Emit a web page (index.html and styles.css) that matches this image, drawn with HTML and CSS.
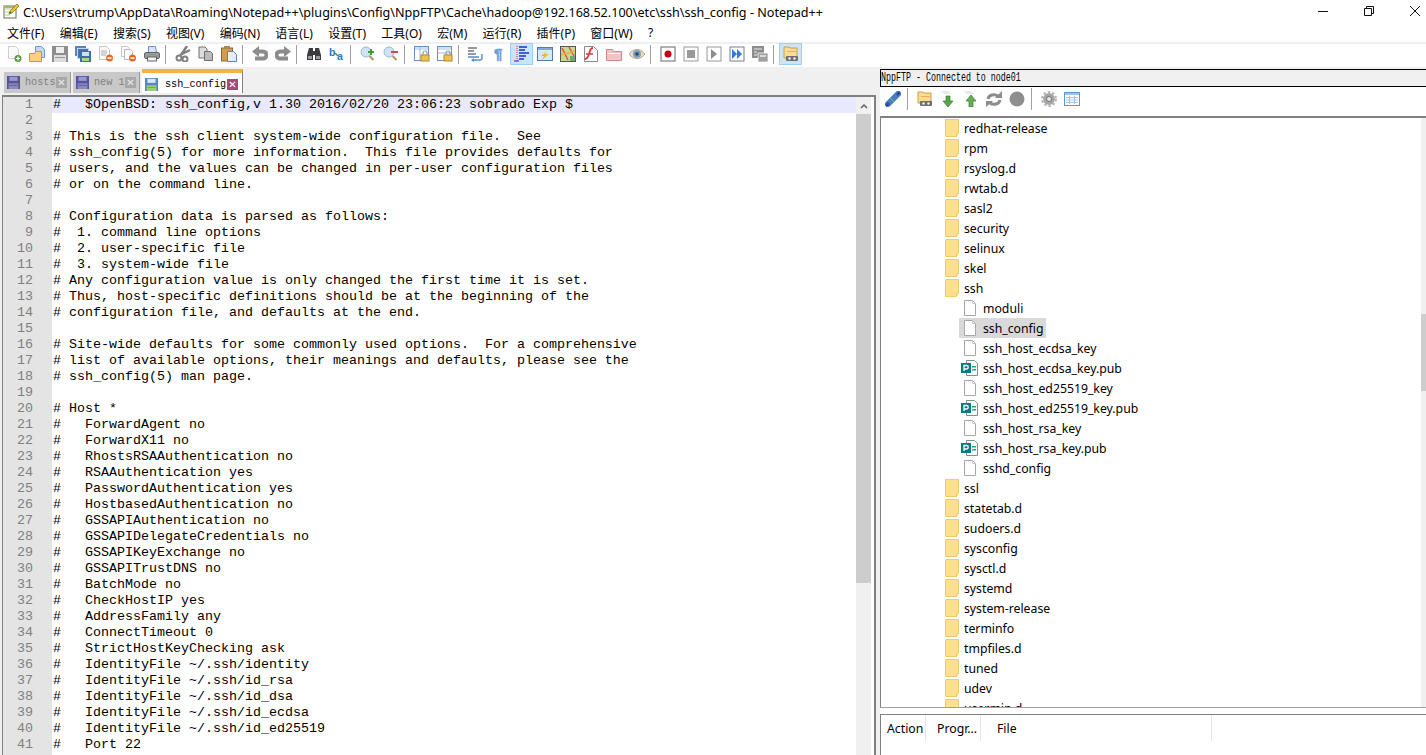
FILE: index.html
```html
<!DOCTYPE html>
<html lang="zh">
<head>
    <meta charset="UTF-8">
    <meta name="viewport" content="width=device-width, initial-scale=1.0">
    <title>ssh_config - Notepad++</title>
    <link rel="stylesheet" href="styles.css">
</head>
<body>

<svg class="defs" width="0" height="0">
    <symbol id="floppy" viewBox="0 0 16 16">
        <rect x="0" y="0" width="16" height="16" fill="#54549c"/>
        <rect x="3" y="1" width="10" height="5" fill="#9a9ac8"/>
        <rect x="2" y="9" width="12" height="7" fill="#8a8abc"/>
        <rect x="3" y="11" width="10" height="1" fill="#54549c"/>
    </symbol>
    <symbol id="floppyon" viewBox="0 0 16 16">
        <rect x="0" y="0" width="16" height="16" fill="#5a86c8"/>
        <rect x="3" y="1" width="10" height="5" fill="#dbe8f8"/>
        <rect x="2" y="9" width="12" height="7" fill="#9ed070"/>
        <rect x="3" y="11" width="10" height="1" fill="#6aa040"/>
    </symbol>
    <symbol id="folder" viewBox="0 0 16 18">
        <path d="M1.500 .5h13v14l-2 3h-11z" fill="#ffe08f" stroke="#f2cb6a"/>
        <path d="M12.500 17.500v-3h2" fill="#fff3c8" stroke="#f2cb6a"/>
    </symbol>
    <symbol id="file" viewBox="0 0 14 16">
        <path d="M1.500 .5h8l3 3v12h-11z" fill="#fff" stroke="#a8a8a8"/>
        <path d="M9.500 .5v3h3" fill="none" stroke="#c8c8c8"/>
    </symbol>
    <symbol id="pub" viewBox="0 0 18 16">
        <path d="M5.500 .5h8l3 3v12h-11z" fill="#fff" stroke="#8a8a8a"/>
        <rect x="11" y="6" width="4" height="1.500" fill="#2a9a96"/>
        <rect x="11" y="9" width="4" height="1.500" fill="#2a9a96"/>
        <rect x="0" y="3" width="10" height="10" fill="#087b80"/>
        <path d="M3 11V5.500h2.500a1.700 1.700 0 0 1 0 3.500H3" fill="none" stroke="#fff" stroke-width="1.300"/>
    </symbol>
    <symbol id="tapefolder" viewBox="0 0 16 16">
        <path d="M1 1h5l1 1h7v10H1z" fill="#fbdc93" stroke="#c9a04c"/>
        <rect x="4" y="5" width="9" height="1" fill="#f4a860"/>
        <rect x="3" y="10" width="12" height="5" rx="1" fill="#6e6e6e"/>
        <circle cx="6.500" cy="12.500" r="1.300" fill="#eee"/>
        <circle cx="11.500" cy="12.500" r="1.300" fill="#eee"/>
    </symbol>
</svg>

<div class="app">
    <div class="titlebar">
        <svg class="appicon" width="16" height="16" viewBox="0 0 16 16">
            <rect x="1" y="3" width="12" height="12" fill="#fff" stroke="#6a6a50"/>
            <path d="M2 6h10M2 9h7M2 12h5" stroke="#c8c080"/>
            <path d="M1 3h12v2H1z" fill="#a8b86a"/>
            <path d="M6 11l1-3 7-7 2 2-7 7z" fill="#f4c020" stroke="#5c7a20" stroke-width=".7"/>
            <path d="M6 11l1-3 2 2z" fill="#3a8a20"/>
        </svg>
        <span class="wintitle">C:\Users\trump\AppData\Roaming\Notepad++\plugins\Config\NppFTP\Cache\hadoop@192.168.52.100\etc\ssh\ssh_config - Notepad++</span>
        <div class="winctl">
            <button><svg width="10" height="10" viewBox="0 0 10 10"><path d="M0 5.500h10" stroke="#111"/></svg></button>
            <button><svg width="10" height="10" viewBox="0 0 10 10"><path d="M.5 2.500h7v7h-7zM2.500 2.500v-2h7v7h-2" fill="none" stroke="#111"/></svg></button>
            <button><svg width="10" height="10" viewBox="0 0 10 10"><path d="M0 0l10 10M10 0L0 10" stroke="#111"/></svg></button>
        </div>
    </div>

    <div class="menubar">
        <span>文件(F)</span><span>编辑(E)</span><span>搜索(S)</span><span>视图(V)</span><span>编码(N)</span><span>语言(L)</span><span>设置(T)</span><span>工具(O)</span><span>宏(M)</span><span>运行(R)</span><span>插件(P)</span><span>窗口(W)</span><span>?</span>
    </div>

    <div class="toolbar">
        <!-- file -->
        <button><svg viewBox="0 0 16 16"><path d="M2.500 .5h7l3 3v9h-10z" fill="#fafafa" stroke="#cfcfcf"/><circle cx="12" cy="12.500" r="3.500" fill="#5b9a3c"/><path d="M10 12.500h4M12 10.500v4" stroke="#fff" stroke-width="1.200"/></svg></button>
        <button><svg viewBox="0 0 16 16"><path d="M6.500 .5h6l3 3v8h-9z" fill="#c5d8f2" stroke="#6f96cf"/><path d="M.5 7.500h5l1-2h6v10H.5z" fill="#fbd27a" stroke="#c49a3e"/></svg></button>
        <button><svg viewBox="0 0 16 16"><rect x="0" y="0" width="16" height="16" fill="#8e8e8e"/><rect x="4" y="1" width="8" height="6" fill="#efefef"/><rect x="2" y="9" width="12" height="7" fill="#dcdcdc"/><rect x="3" y="11" width="10" height="1" fill="#999"/></svg></button>
        <button><svg viewBox="0 0 16 16"><rect x="0" y="0" width="11" height="10" fill="#5f82b8"/><rect x="2.500" y="2.500" width="11" height="10" fill="#4a72aa" stroke="#c5d6ee"/><rect x="5" y="5" width="11" height="11" fill="#3f6ea8"/><rect x="7" y="6" width="7" height="4" fill="#cfe0f4"/><rect x="7" y="12" width="7" height="3" fill="#a8d878"/></svg></button>
        <button><svg viewBox="0 0 16 16"><path d="M1.500 .5h7l3 3v10h-10z" fill="#fafafa" stroke="#c4c4c4"/><path d="M3 5h6M3 7h6M3 9h5" stroke="#aaa"/><circle cx="11.500" cy="12" r="3.500" fill="#e86a20"/><rect x="9.500" y="11.300" width="4" height="1.500" fill="#fff"/></svg></button>
        <button><svg viewBox="0 0 16 16"><path d="M.5 .5h6l2 2v8h-8z" fill="#fafafa" stroke="#c8c8c8"/><path d="M3.500 3.500h6l2 2v8h-8z" fill="#fafafa" stroke="#b8b8b8"/><circle cx="11.500" cy="12" r="3.500" fill="#e86a20"/><rect x="9.500" y="11.300" width="4" height="1.500" fill="#fff"/></svg></button>
        <button><svg viewBox="0 0 16 16"><path d="M4.500 .5h7l1 6h-8z" fill="#d5e4f6" stroke="#6f8fc0"/><rect x=".5" y="6.500" width="15" height="6" rx="1.500" fill="#9a9a9a" stroke="#666"/><rect x="3.500" y="11" width="9" height="4" fill="#f4f4f4" stroke="#666"/></svg></button>
        <i class="sep"></i>
        <!-- edit -->
        <button><svg viewBox="0 0 16 16"><path d="M12 0L6 9M15 4L5 9" stroke="#808080" stroke-width="2.500" fill="none"/><circle cx="4" cy="12" r="2.500" fill="none" stroke="#808080" stroke-width="2"/><circle cx="10" cy="13" r="2.500" fill="none" stroke="#808080" stroke-width="2"/></svg></button>
        <button><svg viewBox="0 0 16 16"><path d="M1 1h6l2 2v9H1z" fill="#ddd" stroke="#707070"/><path d="M6.500 5.500h6l2 2v7h-8z" fill="#bbb" stroke="#707070"/></svg></button>
        <button><svg viewBox="0 0 16 16"><rect x=".5" y="2" width="11" height="13" fill="#d49a50" stroke="#8a6a30"/><rect x="3" y="0" width="6" height="3" fill="#a88850"/><path d="M6.500 5.500h6l3 3v7h-9z" fill="#e4eefa" stroke="#6080b8"/></svg></button>
        <i class="sep"></i>
        <button><svg viewBox="0 0 16 16"><path d="M5 5.500h6a3.500 3.500 0 0 1 0 7H3" fill="none" stroke="#8c8c8c" stroke-width="4"/><path d="M7 0v11L0 5.500z" fill="#8c8c8c"/></svg></button>
        <button><svg viewBox="0 0 16 16"><path d="M11 5.500H5a3.500 3.500 0 0 0 0 7h8" fill="none" stroke="#8c8c8c" stroke-width="4"/><path d="M9 0v11l7-5.500z" fill="#8c8c8c"/></svg></button>
        <i class="sep"></i>
        <!-- search -->
        <button><svg viewBox="0 0 16 16"><path d="M3 2h4v3h2V2h4l2 7v5H9V9H7v5H1V9z" fill="#3c3c3c"/><rect x="2" y="10" width="4" height="3" fill="#99a"/><rect x="10" y="10" width="4" height="3" fill="#99a"/></svg></button>
        <button><svg viewBox="0 0 16 16"><text x="0" y="9.500" class="glyph bl">b</text><text x="8" y="13.700" class="glyph bl">a</text><path d="M6 7l3 3" stroke="#4a9a4a" stroke-width="1.500"/></svg></button>
        <i class="sep"></i>
        <button><svg viewBox="0 0 16 16"><circle cx="6" cy="6" r="5" fill="#cfe2f6" stroke="#9ab8d8"/><path d="M9.500 10l4 4" stroke="#b8925a" stroke-width="2"/><path d="M8 6h6M11 3v6" stroke="#3d9a3d" stroke-width="2"/></svg></button>
        <button><svg viewBox="0 0 16 16"><circle cx="6" cy="6" r="5" fill="#cfe2f6" stroke="#9ab8d8"/><path d="M9.500 10l4 4" stroke="#b8925a" stroke-width="2"/><path d="M8 6h7" stroke="#d84848" stroke-width="2"/></svg></button>
        <i class="sep"></i>
        <!-- view -->
        <button><svg viewBox="0 0 16 16"><rect x=".5" y=".5" width="14" height="14" fill="#fff" stroke="#6a90c8"/><rect x="1" y="1" width="13" height="3" fill="#cfe0f4"/><path d="M6 1v13" stroke="#9ab8e0"/><rect x="7" y="9" width="8" height="6" fill="#ecc14e" stroke="#b08a2c"/><path d="M9 9V7a2 2 0 0 1 4 0v2" fill="none" stroke="#999" stroke-width="1.200"/></svg></button>
        <button><svg viewBox="0 0 16 16"><rect x=".5" y=".5" width="14" height="14" fill="#fff" stroke="#6a90c8"/><rect x="1" y="1" width="13" height="3" fill="#cfe0f4"/><path d="M1 7h13" stroke="#9ab8e0"/><rect x="7" y="9" width="8" height="6" fill="#ecc14e" stroke="#b08a2c"/><path d="M9 9V7a2 2 0 0 1 4 0v2" fill="none" stroke="#999" stroke-width="1.200"/></svg></button>
        <i class="sep"></i>
        <button><svg viewBox="0 0 16 16"><path d="M0 2h9M0 5h6M0 8h8" stroke="#333" stroke-width="1.200"/><path d="M0 11h11" stroke="#7da8dc" stroke-width="2"/><path d="M4 14h8a2 2 0 0 0 2-2V8" fill="none" stroke="#5a8fd0" stroke-width="1.400"/><path d="M6 12v4l-3-2z" fill="#5a8fd0"/></svg></button>
        <button><svg viewBox="0 0 16 16"><text x="3" y="12.800" class="glyph pil">¶</text></svg></button>
        <button class="on"><svg viewBox="0 0 16 16"><path d="M3 0v16" stroke="#d83030" stroke-dasharray="1 1"/><path d="M5 1h8M5 4h6M5 7h10M5 10h7M5 13h5" stroke="#1030d8" stroke-width="1.400"/><path d="M0 15h5" stroke="#1030d8"/></svg></button>
        <button><svg viewBox="0 0 16 16"><rect x=".5" y="1.500" width="15" height="13" fill="#d8e8f8" stroke="#5478b0"/><rect x="1" y="2" width="14" height="2" fill="#88a8d8"/><path d="M10 5L4 10h3l-2 4 7-6H8z" fill="#f0b830"/></svg></button>
        <button><svg viewBox="0 0 16 16"><rect x=".5" y=".5" width="15" height="15" fill="#c8d890" stroke="#555"/><path d="M2 2l6 12M9 1l5 9" stroke="#e05050" stroke-width="1.500"/><path d="M1 9l14-4" stroke="#e8b040" stroke-width="1.500"/><rect x="10" y="10" width="5" height="5" fill="#70a870"/></svg></button>
        <button><svg viewBox="0 0 16 16"><path d="M1.500 .5h9l4 4v11h-13z" fill="#fff" stroke="#8a8a8a"/><path d="M10 2C7 2 7 5 6 8S4 13 2 13" fill="none" stroke="#d83a3a" stroke-width="1.800"/><path d="M3 8h7" stroke="#d83a3a" stroke-width="1.500"/></svg></button>
        <button><svg viewBox="0 0 16 16"><path d="M.5 3.500h6l1 2h8v9H.5z" fill="#f3c4c4" stroke="#c88"/><path d="M2 7.500h12" stroke="#fff"/></svg></button>
        <button><svg viewBox="0 0 16 16"><path d="M0 8c4-6 12-6 16 0-4 6-12 6-16 0z" fill="#e8dcc8" stroke="#c0a888"/><circle cx="8" cy="8" r="4" fill="#7aa0c8"/><circle cx="8" cy="8" r="1.800" fill="#345"/></svg></button>
        <i class="sep"></i>
        <!-- macro -->
        <button><svg viewBox="0 0 16 16"><rect x="1" y="1" width="14" height="14" fill="#fff" stroke="#666"/><circle cx="8" cy="8" r="3.500" fill="#c80014"/></svg></button>
        <button><svg viewBox="0 0 16 16"><rect x="1" y="1" width="14" height="14" fill="#fff" stroke="#999"/><rect x="4" y="4" width="8" height="8" fill="#999"/></svg></button>
        <button><svg viewBox="0 0 16 16"><rect x="1" y="1" width="14" height="14" fill="#fff" stroke="#999"/><path d="M5 3v10l6-5z" fill="#8c8c8c"/></svg></button>
        <button><svg viewBox="0 0 16 16"><rect x="1" y="1" width="14" height="14" fill="#fff" stroke="#7080a0"/><path d="M3 3v10l5-5zM8 3v10l5-5z" fill="#3a78d8"/></svg></button>
        <button><svg viewBox="0 0 16 16"><rect x="0" y="0" width="12" height="12" fill="#8c8c8c"/><rect x="6" y="7" width="10" height="9" fill="#a0a0a0" stroke="#fff" stroke-width=".7"/><path d="M2 3h8M2 6h3M2 9h3" stroke="#eee"/><path d="M8 10h6" stroke="#eee" stroke-width="1.500"/></svg></button>
        <i class="sep"></i>
        <button class="on"><svg><use href="#tapefolder"/></svg></button>
    </div>

    <div class="main">
        <div class="left">
            <div class="tabs">
                <div class="tab"><svg class="fl"><use href="#floppy"/></svg><span>hosts</span><b class="x">✕</b></div>
                <div class="tab"><svg class="fl"><use href="#floppy"/></svg><span>new 1</span><b class="x">✕</b></div>
                <div class="tab active"><svg class="fl"><use href="#floppyon"/></svg><span>ssh_config</span><b class="x">✕</b></div>
            </div>
            <div class="editor">
                <pre class="gutter">1
2
3
4
5
6
7
8
9
10
11
12
13
14
15
16
17
18
19
20
21
22
23
24
25
26
27
28
29
30
31
32
33
34
35
36
37
38
39
40
41</pre>
                <pre class="code"><span class="curline">#   $OpenBSD: ssh_config,v 1.30 2016/02/20 23:06:23 sobrado Exp $</span>
# This is the ssh client system-wide configuration file.  See
# ssh_config(5) for more information.  This file provides defaults for
# users, and the values can be changed in per-user configuration files
# or on the command line.

# Configuration data is parsed as follows:
#  1. command line options
#  2. user-specific file
#  3. system-wide file
# Any configuration value is only changed the first time it is set.
# Thus, host-specific definitions should be at the beginning of the
# configuration file, and defaults at the end.

# Site-wide defaults for some commonly used options.  For a comprehensive
# list of available options, their meanings and defaults, please see the
# ssh_config(5) man page.

# Host *
#   ForwardAgent no
#   ForwardX11 no
#   RhostsRSAAuthentication no
#   RSAAuthentication yes
#   PasswordAuthentication yes
#   HostbasedAuthentication no
#   GSSAPIAuthentication no
#   GSSAPIDelegateCredentials no
#   GSSAPIKeyExchange no
#   GSSAPITrustDNS no
#   BatchMode no
#   CheckHostIP yes
#   AddressFamily any
#   ConnectTimeout 0
#   StrictHostKeyChecking ask
#   IdentityFile ~/.ssh/identity
#   IdentityFile ~/.ssh/id_rsa
#   IdentityFile ~/.ssh/id_dsa
#   IdentityFile ~/.ssh/id_ecdsa
#   IdentityFile ~/.ssh/id_ed25519
#   Port 22</pre>
                <div class="vscroll">
                    <div class="up"><svg width="8" height="6" viewBox="0 0 8 6"><path d="M1 5l3-3 3 3" fill="none" stroke="#606060" stroke-width="1.500"/></svg></div>
                    <div class="thumb"></div>
                </div>
            </div>
        </div>

        <div class="panel">
            <div class="paneltitle"><span>NppFTP - Connected to node01</span></div>
            <div class="ftpbar">
                <button><svg viewBox="0 0 16 16"><path d="M3 13L13 3" stroke="#4a7cc4" stroke-width="6" stroke-linecap="round"/><path d="M1 15l3-3M12 4l3-3" stroke="#2a4a98" stroke-width="2.500"/><path d="M5 7l4 4" stroke="#58b070" stroke-width="1.500"/></svg></button>
                <i class="sep"></i>
                <button><svg><use href="#tapefolder"/></svg></button>
                <button><svg viewBox="0 0 16 16"><path d="M1 0h7l3 3H4z" fill="#e8e8e8"/><path d="M6 5h4v5h3l-5 6-5-6h3z" fill="#58a848" stroke="#3a7a30" stroke-width=".7"/></svg></button>
                <button><svg viewBox="0 0 16 16"><path d="M1 0h7l3 3H4z" fill="#e8e8e8"/><path d="M6 16h4v-6h3L8 4l-5 6h3z" fill="#68b058" stroke="#3a7a30" stroke-width=".7"/></svg></button>
                <button><svg viewBox="0 0 16 16"><path d="M2 8a6 5 0 0 1 10-3" fill="none" stroke="#8c8c8c" stroke-width="3"/><path d="M9 7h7V0z" fill="#8c8c8c"/><path d="M14 9a6 5 0 0 1-10 3" fill="none" stroke="#8c8c8c" stroke-width="3"/><path d="M7 10H0v6z" fill="#8c8c8c"/></svg></button>
                <button><svg viewBox="0 0 16 16"><circle cx="8" cy="8" r="7.500" fill="#8e8e8e"/></svg></button>
                <i class="sep"></i>
                <button><svg viewBox="0 0 16 16"><circle cx="8" cy="8" r="6" fill="#a6a6a6"/><circle cx="8" cy="8" r="7" fill="none" stroke="#b8b8b8" stroke-width="2" stroke-dasharray="2.500 2"/><circle cx="8" cy="8" r="2.500" fill="#e8e8e8" stroke="#707070"/></svg></button>
                <button><svg viewBox="0 0 16 16"><rect x=".5" y="1.500" width="15" height="13" fill="#fff" stroke="#5e98d4"/><rect x="1" y="2" width="14" height="2" fill="#9cc4ec"/><path d="M2 6.500h12M2 9h12M2 11.500h12M5.500 5v8M10.500 5v8" stroke="#a8c0dc"/></svg></button>
            </div>
            <div class="treewrap">
                <div class="tree">
                    <div class="dir"><svg><use href="#folder"/></svg>redhat-release</div>
                    <div class="dir"><svg><use href="#folder"/></svg>rpm</div>
                    <div class="dir"><svg><use href="#folder"/></svg>rsyslog.d</div>
                    <div class="dir"><svg><use href="#folder"/></svg>rwtab.d</div>
                    <div class="dir"><svg><use href="#folder"/></svg>sasl2</div>
                    <div class="dir"><svg><use href="#folder"/></svg>security</div>
                    <div class="dir"><svg><use href="#folder"/></svg>selinux</div>
                    <div class="dir"><svg><use href="#folder"/></svg>skel</div>
                    <div class="dir"><svg><use href="#folder"/></svg>ssh</div>
                    <div class="leaf"><span><svg><use href="#file"/></svg>moduli</span></div>
                    <div class="leaf"><span class="sel"><svg><use href="#file"/></svg>ssh_config</span></div>
                    <div class="leaf"><span><svg><use href="#file"/></svg>ssh_host_ecdsa_key</span></div>
                    <div class="leaf"><span><svg class="p"><use href="#pub"/></svg>ssh_host_ecdsa_key.pub</span></div>
                    <div class="leaf"><span><svg><use href="#file"/></svg>ssh_host_ed25519_key</span></div>
                    <div class="leaf"><span><svg class="p"><use href="#pub"/></svg>ssh_host_ed25519_key.pub</span></div>
                    <div class="leaf"><span><svg><use href="#file"/></svg>ssh_host_rsa_key</span></div>
                    <div class="leaf"><span><svg class="p"><use href="#pub"/></svg>ssh_host_rsa_key.pub</span></div>
                    <div class="leaf"><span><svg><use href="#file"/></svg>sshd_config</span></div>
                    <div class="dir"><svg><use href="#folder"/></svg>ssl</div>
                    <div class="dir"><svg><use href="#folder"/></svg>statetab.d</div>
                    <div class="dir"><svg><use href="#folder"/></svg>sudoers.d</div>
                    <div class="dir"><svg><use href="#folder"/></svg>sysconfig</div>
                    <div class="dir"><svg><use href="#folder"/></svg>sysctl.d</div>
                    <div class="dir"><svg><use href="#folder"/></svg>systemd</div>
                    <div class="dir"><svg><use href="#folder"/></svg>system-release</div>
                    <div class="dir"><svg><use href="#folder"/></svg>terminfo</div>
                    <div class="dir"><svg><use href="#folder"/></svg>tmpfiles.d</div>
                    <div class="dir"><svg><use href="#folder"/></svg>tuned</div>
                    <div class="dir"><svg><use href="#folder"/></svg>udev</div>
                    <div class="dir"><svg><use href="#folder"/></svg>usermin.d</div>
                </div>
                <div class="treescroll"><div class="thumb"></div></div>
            </div>
            <div class="queue">
                <div class="col c1">Action</div>
                <div class="col c2">Progr...</div>
                <div class="col c3">File</div>
            </div>
        </div>
    </div>
</div>

</body>
</html>
```

FILE: styles.css
```css
html, body {
    margin: 0;
    height: 100%;
    overflow: hidden;
    background: #fff;
}
body {
    font-family: "Noto Sans", "Noto Sans CJK SC", sans-serif;
    font-size: 12px;
    color: #000;
}
button {
    border: none;
    background: none;
    padding: 0;
}
.defs { position: absolute; }
.app {
    display: flex;
    flex-direction: column;
    height: 755px;
    overflow: hidden;
}

/* title + menu */
.titlebar {
    display: flex;
    align-items: center;
    height: 22px;
    padding-left: 3px;
}
.appicon { width: 16px; height: 16px; flex: none; }
.wintitle {
    margin-left: 4px;
    padding-top: 2px;
    white-space: nowrap;
    font-size: 12.6px;
}
.winctl {
    display: flex;
    margin-left: auto;
    margin-right: -12px;
}
.winctl button {
    width: 46px;
    height: 22px;
    display: flex;
    align-items: center;
    justify-content: center;
}
.menubar {
    display: flex;
    align-items: center;
    gap: 15.3px;
    height: 19px;
    padding-top: 1px;
    box-sizing: content-box;
    margin-bottom: -1px;
    border-bottom: 2px solid #f0f0f0;
    padding-left: 7px;
    font-size: 12px;
}

/* toolbar */
.toolbar, .ftpbar {
    display: flex;
    align-items: center;
}
.toolbar {
    align-items: flex-start;
    height: 24px;
    padding-left: 2px;
    border-bottom: 2px solid #f0f0f0;
}
.toolbar button, .ftpbar button {
    width: 23px;
    height: 22px;
    display: flex;
    align-items: center;
    justify-content: center;
    flex: none;
}
.toolbar svg, .ftpbar svg { width: 16px; height: 16px; }
.toolbar button.on {
    background: #cce4f7;
    box-shadow: inset 0 0 0 1px #99d1ff;
}
.sep {
    display: block;
    flex: none;
    width: 1px;
    height: 19px;
    margin: 2px 5px 0 2px;
    background: #a0a0a0;
}
.glyph { font-family: "Liberation Sans", sans-serif; font-weight: bold; }
.glyph.bl { font-size: 10.5px; fill: #2a78c8; }
.glyph.pil { font-size: 15px; fill: #6aa0d8; stroke: #6aa0d8; stroke-width: .6px; }

/* main split */
.main {
    display: flex;
    flex: 1;
    min-height: 0;
    background: #f0f0f0;
}
.left {
    display: flex;
    flex-direction: column;
    width: 876px;
    flex: none;
}
.tabs {
    display: flex;
    align-items: flex-end;
    gap: 2px;
    height: 26px;
    box-sizing: border-box;
    padding: 0 0 2px 4px;
}
.tab {
    display: flex;
    align-items: center;
    height: 21px;
    padding: 0 3px;
    background: #c8c8c8;
    border-right: 1px solid #999;
    color: #808080;
    font-family: "Liberation Mono", monospace;
    font-size: 10.2px;
}
.tab span { margin-left: 5px; width: 30px; white-space: nowrap; }
.fl { width: 13px; height: 13px; flex: none; }
.x {
    display: flex;
    align-items: center;
    justify-content: center;
    width: 11px;
    height: 11px;
    margin-left: 1px;
    background: #a8a8a8;
    color: #eee;
    font: bold 10px "DejaVu Sans", sans-serif;
}
.tab.active {
    height: 24px;
    padding: 3px 4px 0 3px;
    box-sizing: border-box;
    background: #fff;
    border-top: 4px solid #fbaf3e;
    border-right: 1px solid #808080;
    color: #000;
}
.tab.active span { width: 61px; margin-left: 7px; }
.tab.active .x { background: #a84878; color: #fff; }

.editor {
    display: flex;
    flex: 1;
    min-height: 0;
    margin-left: 2px;
    border-top: 2px solid #808080;
    border-left: 1px solid #808080;
    border-right: 2px solid #808080;
    background: #fff;
}
.gutter, .code {
    margin: 0;
    font-family: "Liberation Mono", monospace;
    font-size: 13.33px;
    line-height: 16px;
}
.gutter {
    width: 30px;
    padding-right: 19px;
    text-align: right;
    color: #808080;
    background: #e4e4e4;
    flex: none;
}
.code {
    flex: 1;
    padding-left: 1px;
}
.curline {
    display: block;
    height: 16px;
    margin-left: -1px;
    padding-left: 1px;
    background: #e8e8ff;
}
.vscroll {
    width: 15px;
    margin-right: 3px;
    background: #f0f0f0;
    flex: none;
}
.vscroll .up {
    display: flex;
    align-items: center;
    justify-content: center;
    height: 17px;
}
.vscroll .thumb {
    height: 469px;
    background: #cdcdcd;
}

/* ftp panel */
.panel {
    display: flex;
    flex-direction: column;
    flex: 1;
    min-width: 0;
    margin-left: 4px;
    background: #fff;
}
.paneltitle {
    height: 18px;
    line-height: 16px;
    box-sizing: border-box;
    border: 1px solid #000;
    border-right: none;
    background: #f0f0f0;
    font-family: "Liberation Mono", monospace;
    font-size: 13px;
    white-space: nowrap;
}
.paneltitle span {
    display: inline-block;
    transform: scaleX(.64);
    transform-origin: left center;
}
.ftpbar {
    height: 23px;
    padding: 0 0 6px 1px;
}
.ftpbar .sep { height: 22px; margin: 0 5px 0 3px; }
.treewrap {
    display: flex;
    height: 592px;
    flex: none;
    box-sizing: border-box;
    border-top: 2px solid #808080;
    border-left: 1px solid #808080;
    border-bottom: 1px solid #a0a0a0;
}
.tree {
    flex: 1;
    overflow: hidden;
    font-size: 12.25px;
}
.dir, .leaf {
    display: flex;
    align-items: center;
    height: 20px;
    white-space: nowrap;
}
.dir { padding-left: 63px; }
.dir svg { width: 16px; height: 18px; margin-right: 4px; flex: none; }
.leaf { padding-left: 78px; }
.leaf span {
    display: flex;
    align-items: center;
    height: 20px;
    padding-right: 2px;
}
.leaf svg { width: 14px; height: 16px; margin: 0 6px 0 4px; flex: none; }
.leaf svg.p { width: 18px; margin: 0 4px 0 2px; }
.leaf .sel { background: #d9d9d9; }
.treescroll {
    width: 5px;
    padding-top: 196px;
    background: #f0f0f0;
    flex: none;
}
.treescroll .thumb {
    height: 77px;
    background: #cdcdcd;
}
.queue {
    display: flex;
    flex: 1;
    margin-top: 6px;
    border-top: 1px solid #808080;
    border-left: 1px solid #808080;
    font-size: 12.25px;
}
.col {
    box-sizing: border-box;
    height: 26px;
    line-height: 27px;
    padding-left: 6px;
    border-right: 1px solid #e5e5e5;
}
.c1 { width: 45px; }
.c2 { width: 55px; padding-left: 11px; }
.c3 { width: 231px; padding-left: 16px; }
```
